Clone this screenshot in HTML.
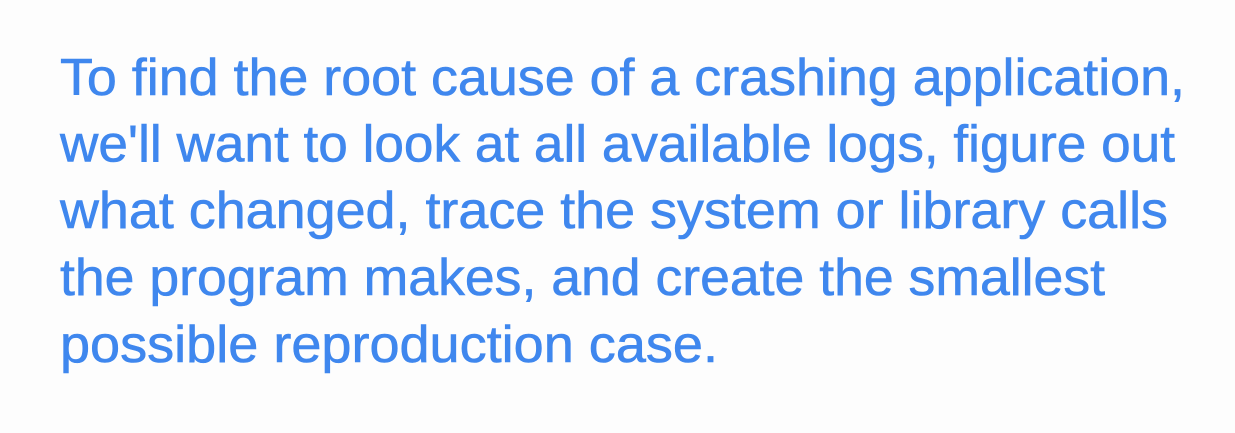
<!DOCTYPE html>
<html><head><style>
html,body{margin:0;padding:0;background:#fdfdfd;width:1235px;height:433px;overflow:hidden}
svg{display:block}
text{font-family:"Liberation Sans",sans-serif;font-size:52px;fill:#3f87ee;stroke:#3f87ee;stroke-width:0.6}
</style></head><body>
<svg width="1235" height="433" viewBox="0 0 1235 433">
<text x="60" y="95" textLength="1125" lengthAdjust="spacingAndGlyphs">To find the root cause of a crashing application,</text>
<text x="60" y="161.5" textLength="1115" lengthAdjust="spacingAndGlyphs">we'll want to look at all available logs, figure out</text>
<text x="60" y="228" textLength="1108" lengthAdjust="spacingAndGlyphs">what changed, trace the system or library calls</text>
<text x="60" y="295" textLength="1045" lengthAdjust="spacingAndGlyphs">the program makes, and create the smallest</text>
<text x="60" y="362" textLength="658" lengthAdjust="spacingAndGlyphs">possible reproduction case.</text>
</svg>
</body></html>
